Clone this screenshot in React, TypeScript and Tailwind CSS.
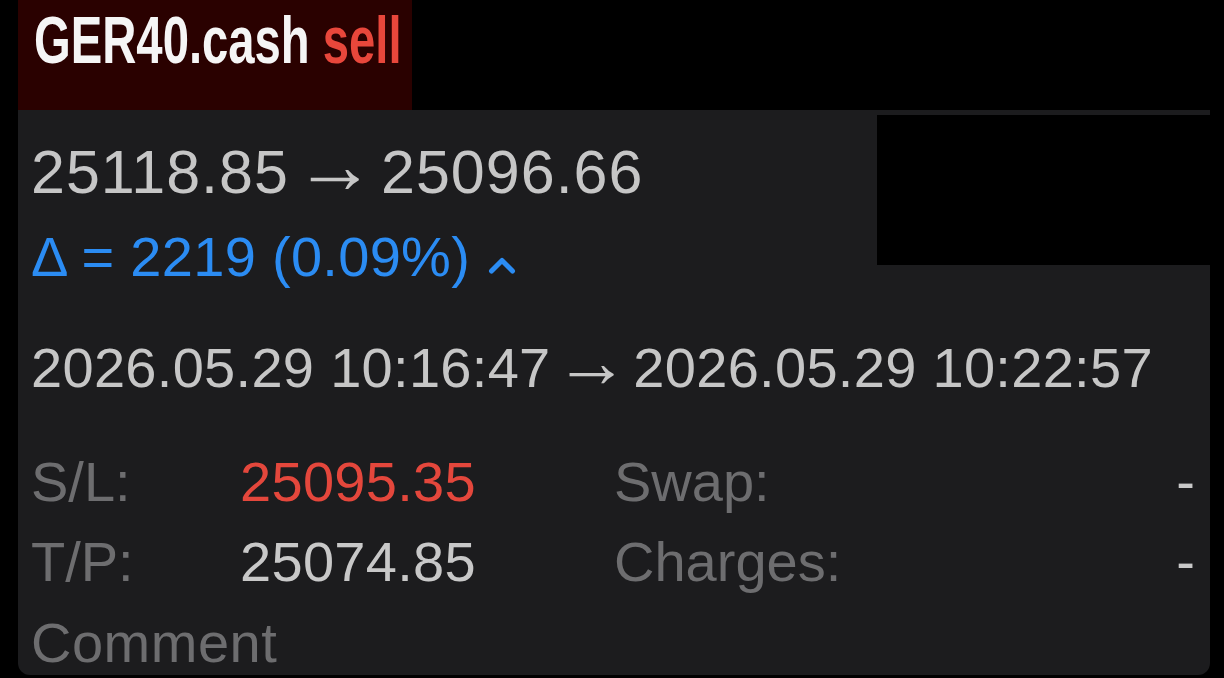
import React from "react";

const FONT = { fontFamily: '"Liberation Sans", Arial, sans-serif' };

const ROWS = [
  { label: "S/L:", value: "25095.35", valueColor: "text-[#e4473c]", label2: "Swap:", right: "-" },
  { label: "T/P:", value: "25074.85", valueColor: "text-[#c8c8c8]", label2: "Charges:", right: "-" },
];

// the arrow glyph is drawn small by Liberation, so it is set larger
const Arrow: React.FC<{ gap: string }> = ({ gap }) => (
  <span className={`inline-block text-[1.33em] leading-[0] ${gap}`}>→</span>
);

const ChevronUp: React.FC = () => (
  <svg width="28" height="19" viewBox="0 0 28 19" className="ml-[18px] mt-[16px] shrink-0">
    <polyline
      points="3.5,15 14,4.5 24.5,15"
      fill="none"
      stroke="#2b8cf3"
      strokeWidth="5"
      strokeLinecap="round"
      strokeLinejoin="round"
    />
  </svg>
);

export default function App() {
  return (
    <div className="h-[678px] overflow-hidden bg-black pl-[18px] pr-[14px]" style={FONT}>
      {/* Header */}
      <div className="w-[394px] h-[110px] bg-[#2a0100] pl-[16px] pt-[6px] overflow-hidden">
        <div className="inline-block whitespace-nowrap origin-left scale-x-[0.705] text-[67px] leading-[67px] font-bold">
          <span className="text-[#f5f5f5]">GER40.cash</span>{" "}
          <span className="text-[#e8473b]">sell</span>
        </div>
      </div>

      {/* Card */}
      <div className="relative h-[565px] bg-[#1c1c1e] rounded-b-[12px] pl-[13px] pr-[15px] pt-[22px]">
        <div className="absolute top-[5px] right-0 w-[333px] h-[150px] bg-black" />

        <div className="h-[80px] text-[61px] leading-[80px] tracking-[1px] text-[#c6c6c6] whitespace-nowrap">
          <span>25118.85</span>
          <Arrow gap="mx-[5px]" />
          <span>25096.66</span>
        </div>

        <div className="mt-[5px] flex items-center text-[56px] leading-[80px] tracking-[0.3px] text-[#2b8cf3] whitespace-nowrap">
          <span>Δ = 2219 (0.09%)</span>
          <ChevronUp />
        </div>

        <div className="mt-[31px] h-[80px] text-[56px] leading-[80px] tracking-[0.3px] text-[#c6c6c6] whitespace-nowrap">
          <span>2026.05.29 10:16:47</span>
          <Arrow gap="mx-[4px]" />
          <span>2026.05.29 10:22:57</span>
        </div>

        <div className="mt-[34px] grid grid-cols-[209px_374px_1fr_auto] text-[56px] leading-[80px] whitespace-nowrap">
          {ROWS.map((r) => (
            <React.Fragment key={r.label}>
              <span className="text-[#6d6d6f]">{r.label}</span>
              <span className={`${r.valueColor} tracking-[0.3px]`}>{r.value}</span>
              <span className="text-[#6d6d6f]">{r.label2}</span>
              <span className="text-[#c8c8c8] text-right">{r.right}</span>
            </React.Fragment>
          ))}
        </div>

        <div className="mt-[9px] text-[56px] leading-[64px] tracking-[0.5px] text-[#6d6d6f]">Comment</div>
      </div>
    </div>
  );
}
